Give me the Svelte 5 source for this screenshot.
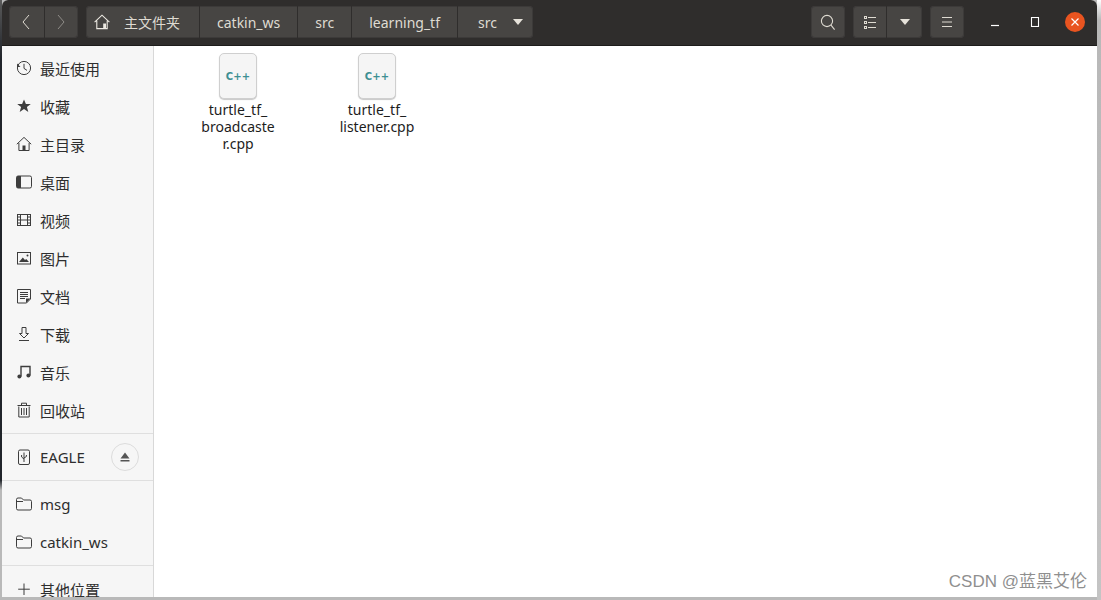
<script lang="ts">
  const places = [
    { label: "最近使用", icon: "recent" },
    { label: "收藏", icon: "star" },
    { label: "主目录", icon: "home" },
    { label: "桌面", icon: "desktop" },
    { label: "视频", icon: "video" },
    { label: "图片", icon: "picture" },
    { label: "文档", icon: "doc" },
    { label: "下载", icon: "download" },
    { label: "音乐", icon: "music" },
    { label: "回收站", icon: "trash" }
  ];
  const crumbs = ["catkin_ws", "src", "learning_tf"];
  const files = [
    { lines: ["turtle_tf_", "broadcaste", "r.cpp"] },
    { lines: ["turtle_tf_", "listener.cpp"] }
  ];
</script>

{#snippet icon(name: string)}
  <svg class="side-icon" viewBox="0 0 16 16" width="16" height="16" fill="none" stroke="#3d3d3d" stroke-width="1">
    {#if name === "recent"}
      <circle cx="8" cy="8" r="6.6" />
      <path d="M8 3.8V8.4L11 10.4" />
      <path d="M1 3.5V7H4.5" stroke="none" fill="#3d3d3d" />
    {:else if name === "star"}
      <path d="M8 1.5 9.9 6H14.8L10.9 9 12.3 14 8 11.1 3.7 14 5.1 9 1.2 6H6.1Z" fill="#3d3d3d" stroke="none" />
    {:else if name === "home"}
      <path d="M.8 8.2 8 1.4 15.2 8.2M2.9 7V14.5H13.1V7" />
      <path d="M6.5 14.5V9.5H9.5V14.5Z" fill="#3d3d3d" stroke="none" />
    {:else if name === "desktop"}
      <rect x=".5" y="2" width="15" height="12" rx="1.6" />
      <path d="M.5 3.5A1.5 1.5 0 0 1 2 2H5V14H2A1.5 1.5 0 0 1 .5 12.5Z" fill="#3d3d3d" stroke="none" />
    {:else if name === "video"}
      <rect x="1.5" y="2.5" width="13" height="11" />
      <path d="M4.5 2.5V13.5M11.5 2.5V13.5M4.5 8H11.5M1.5 5H4.5M1.5 8H4.5M1.5 11H4.5M11.5 5H14.5M11.5 8H14.5M11.5 11H14.5" />
    {:else if name === "picture"}
      <rect x="1.5" y="2.5" width="13" height="11.5" />
      <path d="M3 12 6.8 7.5 9 10 10.2 9 13 12Z" fill="#3d3d3d" stroke="none" />
      <circle cx="11.5" cy="5.5" r="1" fill="#3d3d3d" stroke="none" />
    {:else if name === "doc"}
      <path d="M1.5 1.5H14.5V11L10.5 15H1.5Z" />
      <path d="M4 4.5H12M4 6.5H12M4 8.5H12M4 10.5H9" />
      <path d="M10 15V10.5H14.5Z" fill="#3d3d3d" stroke="none" />
    {:else if name === "download"}
      <path d="M6 1.5H10V7.5H12.5L8 12 3.5 7.5H6Z" />
      <path d="M3 14.5H13" />
    {:else if name === "music"}
      <path d="M5 12.5V2.5H14V11.5" stroke-width="1.4" />
      <circle cx="3.4" cy="12.6" r="2" fill="#3d3d3d" stroke="none" />
      <circle cx="12.4" cy="11.6" r="2" fill="#3d3d3d" stroke="none" />
    {:else if name === "trash"}
      <path d="M2.8 4.5V15H13.2V4.5M1.5 3.5H14.5M5.5 3V1.2H10.5V3" />
      <path d="M5.5 6V13M8 6V13M10.5 6V13" />
    {:else if name === "usb"}
      <rect x="2.5" y="1" width="11" height="14.5" rx="1.5" />
      <path d="M8 3.5V13M5.6 6V8L8 10M10.4 6V7.5L8 9" />
    {:else if name === "folder"}
      <path d="M.5 3.5A1.5 1.5 0 0 1 2 2H5.5L7.5 4H14A1.5 1.5 0 0 1 15.5 5.5V12.5A1.5 1.5 0 0 1 14 14H2A1.5 1.5 0 0 1 .5 12.5Z" />
      <path d="M.5 5.5H7" />
    {:else if name === "plus"}
      <path d="M8 2.5V14M2.2 8.2H13.8" />
    {/if}
  </svg>
{/snippet}

{#snippet cpp()}
  <div class="file-icon"><span>C++</span></div>
{/snippet}

<div class="desk">
  <div class="strip-left"></div>

  <div class="window">
    <header class="titlebar">
      <div class="group nav">
        <button class="btn nav-btn" aria-label="back">
          <svg width="10" height="16" viewBox="0 0 10 16" fill="none" stroke="#dfdbd2" stroke-width="1"><path d="M8 1 2 8 8 15" /></svg>
        </button>
        <button class="btn nav-btn" aria-label="forward">
          <svg width="10" height="16" viewBox="0 0 10 16" fill="none" stroke="#8f8c88" stroke-width="1"><path d="M2 1 8 8 2 15" /></svg>
        </button>
      </div>

      <div class="group path">
        <div class="crumb first">
          <svg width="16" height="16" viewBox="0 0 16 16" fill="none" stroke="#eeeae3" stroke-width="1.1">
            <path d="M.6 8.2 8 1.2 15.4 8.2M2.8 6.8V14.6H13.2V6.8" />
            <path d="M9.2 14.6V9.6H12V14.6Z" fill="#eeeae3" stroke="none" />
          </svg>
          <span>主文件夹</span>
        </div>
        {#each crumbs as crumb}
          <div class="crumb">{crumb}</div>
        {/each}
        <div class="crumb last">
          <span>src</span>
          <svg width="10" height="6" viewBox="0 0 10 6"><path d="M0 0H10L5 6Z" fill="#e6e2da" /></svg>
        </div>
      </div>

      <div class="spacer"></div>

      <div class="group tool">
        <button class="btn wide" aria-label="search">
          <svg width="16" height="17" viewBox="0 0 16 17" fill="none" stroke="#dfdbd2" stroke-width="1.1">
            <circle cx="7" cy="7" r="5.6" /><path d="M11 11.2 14.6 15.6" />
          </svg>
        </button>
      </div>

      <div class="group tool">
        <button class="btn view" aria-label="view">
          <svg width="12" height="13" viewBox="0 0 12 13" fill="none" stroke="#dfdbd2" stroke-width="1">
            <path d="M4 1.5H12M4 6.5H12M4 11.5H12" />
            <rect x=".5" y=".5" width="2" height="2" /><rect x=".5" y="5.5" width="2" height="2" /><rect x=".5" y="10.5" width="2" height="2" />
          </svg>
        </button>
        <button class="btn caret" aria-label="view options">
          <svg width="10" height="6" viewBox="0 0 10 6"><path d="M0 0H10L5 6Z" fill="#e6e2da" /></svg>
        </button>
      </div>

      <div class="group tool">
        <button class="btn wide" aria-label="menu">
          <svg width="12" height="12" viewBox="0 0 12 12" fill="none" stroke="#dfdbd2" stroke-width="1"><path d="M1 1.5H11M1 6H11M1 10.5H11" /></svg>
        </button>
      </div>

      <div class="win-controls">
        <span class="win"><svg width="10" height="10" viewBox="0 0 10 10"><path d="M1 8.5H9" stroke="#fff" stroke-width="1.2" /></svg></span>
        <span class="win"><svg width="10" height="10" viewBox="0 0 10 10"><rect x="1.5" y=".5" width="7" height="9" fill="none" stroke="#fff" stroke-width="1.1" /></svg></span>
        <span class="win close"><svg width="10" height="10" viewBox="0 0 10 10"><path d="M1.5 1.5 8.5 8.5M8.5 1.5 1.5 8.5" stroke="#fff" stroke-width="1.2" /></svg></span>
      </div>
    </header>

    <div class="body">
      <aside class="sidebar">
        <div class="section first-section">
          {#each places as place}
            <div class="row">
              {@render icon(place.icon)}
              <span>{place.label}</span>
            </div>
          {/each}
        </div>
        <div class="section">
          <div class="row device">
            {@render icon("usb")}
            <span>EAGLE</span>
            <div class="eject">
              <svg width="10" height="10" viewBox="0 0 10 10" fill="#555"><path d="M5 .5 9.5 6.5H.5ZM.5 8H9.5V9.6H.5Z" /></svg>
            </div>
          </div>
        </div>
        <div class="section">
          <div class="row">{@render icon("folder")}<span>msg</span></div>
          <div class="row">{@render icon("folder")}<span>catkin_ws</span></div>
        </div>
        <div class="section last-section">
          <div class="row">{@render icon("plus")}<span>其他位置</span></div>
        </div>
      </aside>

      <main class="files">
        {#each files as file}
          <div class="file">
            {@render cpp()}
            <div class="name">
              {#each file.lines as line}
                <div>{line}</div>
              {/each}
            </div>
          </div>
        {/each}
      </main>
    </div>

    <div class="watermark">CSDN @蓝黑艾伦</div>
  </div>

  <div class="strip-right"></div>
</div>

<style>
  :global(body) {
    margin: 0;
    background: #b9b9b9;
    overflow: hidden;
  }

  button {
    font: inherit;
    padding: 0;
    border: 0;
  }

  .desk {
    display: flex;
    width: 1101px;
    height: 600px;
    overflow: hidden;
    align-items: flex-start;
    font-family: "Noto Sans", "Noto Sans CJK SC", sans-serif;
  }

  .strip-left {
    flex: 0 0 2px;
    height: 600px;
    background: linear-gradient(to bottom, #5a5a5a 0, #20242a 60px, #20242a 480px, #b9b9b9 490px);
  }

  .strip-right {
    flex: 0 0 4px;
    height: 600px;
    background: linear-gradient(to bottom, #fff 0, #b8b8b8 20px, #c4c4c4 100%);
  }

  .window {
    position: relative;
    flex: 0 0 1095px;
    height: 597px;
    display: flex;
    flex-direction: column;
    background: #fff;
    overflow: hidden;
    border-radius: 6px 6px 0 0;
  }

  .titlebar {
    flex: 0 0 46px;
    box-sizing: border-box;
    height: 46px;
    display: flex;
    align-items: center;
    padding: 0 12px 1px 7px;
    background: #2f2d2c;
    border-bottom: 1px solid #1d1c1b;
    color: #dfdbd2;
    font-size: 14px;
  }

  .group {
    display: flex;
    height: 32px;
    background: #474543;
    border-radius: 4px;
    overflow: hidden;
    box-shadow: inset 0 0 0 1px #3c3a39;
  }

  .btn {
    display: flex;
    align-items: center;
    justify-content: center;
    height: 32px;
    background: transparent;
  }

  .nav { width: 69px; }
  .nav-btn { width: 34.5px; }
  .nav-btn + .nav-btn { border-left: 1px solid #2f2d2c; }

  .path {
    margin-left: 8px;
    width: 447px;
  }

  .crumb {
    display: flex;
    align-items: center;
    justify-content: center;
    box-sizing: border-box;
    padding: 0 17px;
    border-right: 1px solid #2f2d2c;
    white-space: nowrap;
  }

  .crumb.first {
    width: 114px;
    padding: 0 0 0 8px;
    gap: 14px;
    justify-content: flex-start;
  }

  .crumb.last {
    flex: 1;
    border-right: 0;
    gap: 16px;
    padding: 0 10px 0 0;
    justify-content: flex-end;
  }

  .spacer { flex: 1; }

  .tool { margin-left: 8px; }
  .wide { width: 34px; }
  .view { width: 34px; border-right: 1px solid #2f2d2c; }
  .caret { width: 35px; }

  .win-controls {
    display: flex;
    align-items: center;
    margin-left: 11px;
  }

  .win {
    display: flex;
    align-items: center;
    justify-content: center;
    width: 40px;
    height: 20px;
  }

  .close {
    width: 20px;
    margin-left: 10px;
    border-radius: 50%;
    background: #e95420;
  }

  .body {
    flex: 1;
    display: flex;
    min-height: 0;
  }

  .sidebar {
    flex: 0 0 152px;
    box-sizing: border-box;
    display: flex;
    flex-direction: column;
    background: #f6f6f6;
    border-right: 1px solid #d8d8d8;
    color: #2e2e2e;
    font-size: 15px;
    overflow: hidden;
  }

  .section {
    padding: 4px 0;
    border-bottom: 1px solid #dfdfdf;
    flex: 0 0 auto;
  }

  .first-section { padding: 3px 0 4px; }
  .last-section { border-bottom: 0; }

  .row {
    display: flex;
    align-items: center;
    height: 38px;
    padding: 0 0 0 14px;
    gap: 8px;
    white-space: nowrap;
  }

  .side-icon { flex: 0 0 16px; }

  .device { justify-content: flex-start; }

  .eject {
    display: flex;
    align-items: center;
    justify-content: center;
    width: 26px;
    height: 26px;
    margin-left: auto;
    margin-right: 14px;
    border: 1px solid #dcdcdc;
    border-radius: 50%;
  }

  .files {
    flex: 1;
    display: flex;
    align-items: flex-start;
    padding: 7px 0 0 34px;
    gap: 39px;
    background: #fff;
  }

  .file {
    display: flex;
    flex-direction: column;
    align-items: center;
    width: 100px;
  }

  .file-icon {
    box-sizing: border-box;
    display: flex;
    align-items: center;
    justify-content: center;
    width: 38px;
    height: 46px;
    background: #f5f5f5;
    border: 1px solid #cfcfcf;
    border-radius: 5px;
    box-shadow: 0 1px 1px #c8c8c8;
  }

  .file-icon span {
    font-family: "DejaVu Sans", sans-serif;
    font-size: 10px;
    font-weight: 700;
    color: #3d8f92;
    letter-spacing: .2px;
  }

  .name {
    margin-top: 2px;
    font-size: 14px;
    line-height: 17px;
    color: #1d1d1d;
    text-align: center;
  }

  .watermark {
    position: absolute;
    right: 10px;
    bottom: 5px;
    font-family: "Liberation Sans", "Noto Sans CJK SC", sans-serif;
    font-size: 17px;
    color: #8f8f8f;
  }
</style>
